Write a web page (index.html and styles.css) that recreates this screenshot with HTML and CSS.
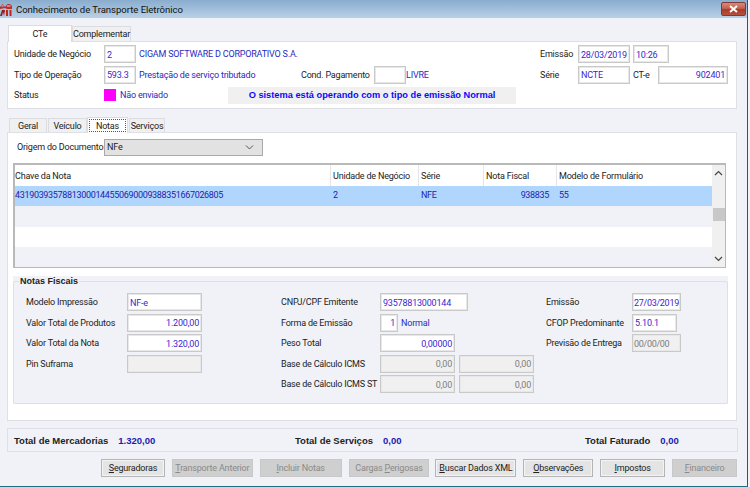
FILE: index.html
```html
<!DOCTYPE html>
<html lang="pt">
<head>
<meta charset="utf-8">
<title>Conhecimento de Transporte Eletrônico</title>
<link rel="stylesheet" href="styles.css">
</head>
<body>
<div class="window">
  <header class="titlebar">
    <svg class="logo" width="12" height="13" viewBox="0 0 12 13"><path d="M0 4 L2.5 1 L5 4 L7.5 1 L10 1 L12 3 L12 6 L7 6 L5 5 L0 6Z" fill="#b8302a"/><path d="M1.5 3 L3.5 3 M7 3 L10.5 3" stroke="#f3d6d2" stroke-width="1"/><path d="M0 13 L2 7 L5 7 L4 13 L3 9 L2 13Z" fill="#8f1f1a"/><rect x="6" y="7" width="2" height="6" fill="#c8201a"/><rect x="9.5" y="7" width="2" height="6" fill="#c8201a"/></svg>
    <span class="title">Conhecimento de Transporte Eletrônico</span>
    <button class="close" aria-label="Fechar"><svg width="9" height="8" viewBox="0 0 9 8"><path d="M1 1 L8 7 M8 1 L1 7" stroke="#fff" stroke-width="2"/></svg></button>
  </header>

  <div class="content">
    <nav class="tabs tabs-top">
      <span class="tab tab-cte">CTe</span>
      <span class="tab tab-comp">Complementar</span>
    </nav>
    <section class="panel panel-head">
      <div class="head-left">
        <div class="row">
          <label class="lbl lbl-head">Unidade de Negócio</label>
          <span class="input w32">2</span>
          <span class="val val-gap">CIGAM SOFTWARE D CORPORATIVO S.A.</span>
        </div>
        <div class="row">
          <label class="lbl lbl-head">Tipo de Operação</label>
          <span class="input w32">593.3</span>
          <span class="val val-gap val-op">Prestação de serviço tributado</span>
          <label class="lbl lbl-cond">Cond. Pagamento</label>
          <span class="input w32"></span>
          <span class="val">LIVRE</span>
        </div>
        <div class="row">
          <label class="lbl lbl-head">Status</label>
          <span class="swatch"></span>
          <span class="val val-status">Não enviado</span>
          <span class="banner">O sistema está operando com o tipo de emissão Normal</span>
        </div>
      </div>
      <div class="head-right">
        <div class="row">
          <label class="lbl lbl-right">Emissão</label>
          <span class="input w52">28/03/2019</span>
          <span class="input w36 ml3">10:26</span>
        </div>
        <div class="row">
          <label class="lbl lbl-right">Série</label>
          <span class="input w52">NCTE</span>
          <label class="lbl lbl-cte">CT-e</label>
          <span class="input w70 right">902401</span>
        </div>
      </div>
    </section>

    <nav class="tabs tabs-sub">
      <span class="stab stab-geral">Geral</span>
      <span class="stab stab-veic">Veículo</span>
      <span class="stab stab-notas"><span class="focus">Notas</span></span>
      <span class="stab stab-serv">Serviços</span>
    </nav>
    <section class="panel panel-main">
      <div class="origem">
        <label class="lbl lbl-origem">Origem do Documento</label>
        <span class="select">NFe<svg width="9" height="5" viewBox="0 0 9 5"><path d="M1 0.5 L4.5 4 L8 0.5" fill="none" stroke="#555"/></svg></span>
      </div>

      <div class="table">
        <div class="grid">
          <div class="th">Chave da Nota</div><div class="th">Unidade de Negócio</div><div class="th">Série</div><div class="th">Nota Fiscal</div><div class="th last">Modelo de Formulário</div>
          <div class="td sel">43190393578813000144550690009388351667026805</div><div class="td sel">2</div><div class="td sel">NFE</div><div class="td sel right">938835</div><div class="td sel">55</div>
          <div class="td alt"></div><div class="td alt"></div><div class="td alt"></div><div class="td alt"></div><div class="td alt"></div>
          <div class="td"></div><div class="td"></div><div class="td"></div><div class="td"></div><div class="td"></div>
          <div class="td alt"></div><div class="td alt"></div><div class="td alt"></div><div class="td alt"></div><div class="td alt"></div>
        </div>
        <div class="scroll">
          <svg width="9" height="6" viewBox="0 0 9 6"><path d="M1 5 L4.5 1.5 L8 5" fill="none" stroke="#444" stroke-width="1.2"/></svg>
          <span class="thumb"></span>
          <svg width="9" height="6" viewBox="0 0 9 6"><path d="M1 1 L4.5 4.5 L8 1" fill="none" stroke="#444" stroke-width="1.2"/></svg>
        </div>
      </div>

      <div class="group">
        <div class="legend">Notas Fiscais</div>
        <div class="frame">
          <div class="col col-a">
            <div class="row fr"><label class="lbl la">Modelo Impressão</label><span class="input w75">NF-e</span></div>
            <div class="row fr"><label class="lbl la">Valor Total de Produtos</label><span class="input w75 right">1.200,00</span></div>
            <div class="row fr"><label class="lbl la">Valor Total da Nota</label><span class="input w75 right">1.320,00</span></div>
            <div class="row fr"><label class="lbl la">Pin Suframa</label><span class="input w75 off"></span></div>
          </div>
          <div class="col col-b">
            <div class="row fr"><label class="lbl lb">CNPJ/CPF Emitente</label><span class="input w88">93578813000144</span></div>
            <div class="row fr"><label class="lbl lb">Forma de Emissão</label><span class="input w18 right">1</span><span class="val ml3">Normal</span></div>
            <div class="row fr"><label class="lbl lb">Peso Total</label><span class="input w75 right">0,00000</span></div>
            <div class="row fr"><label class="lbl lb">Base de Cálculo ICMS</label><span class="input w75 right off">0,00</span><span class="input w75 right off ml4">0,00</span></div>
            <div class="row fr"><label class="lbl lb">Base de Cálculo ICMS ST</label><span class="input w75 right off">0,00</span><span class="input w75 right off ml4">0,00</span></div>
          </div>
          <div class="col col-c">
            <div class="row fr"><label class="lbl lc">Emissão</label><span class="input w49">27/03/2019</span></div>
            <div class="row fr"><label class="lbl lc">CFOP Predominante</label><span class="input w45">5.10.1</span></div>
            <div class="row fr"><label class="lbl lc">Previsão de Entrega</label><span class="input w49 off">00/00/00</span></div>
          </div>
        </div>
      </div>
    </section>

    <section class="totals">
      <span class="tot tot-a"><b>Total de Mercadorias</b><b class="num">1.320,00</b></span>
      <span class="tot tot-b"><b>Total de Serviços</b><b class="num">0,00</b></span>
      <span class="tot tot-c"><b>Total Faturado</b><b class="num">0,00</b></span>
    </section>

    <footer class="actions">
      <button class="btn b-seg"><u>S</u>eguradoras</button>
      <button class="btn off b-tra" disabled><u>T</u>ransporte Anterior</button>
      <button class="btn off b-inc" disabled><u>I</u>ncluir Notas</button>
      <button class="btn off b-car" disabled>Cargas <u>P</u>erigosas</button>
      <button class="btn b-bus"><u>B</u>uscar Dados XML</button>
      <button class="btn b-obs"><u>O</u>bservações</button>
      <button class="btn b-imp"><u>I</u>mpostos</button>
      <button class="btn off b-fin" disabled><u>F</u>inanceiro</button>
    </footer>
  </div>
</div>
</body>
</html>
```
FILE: styles.css
```css
* { box-sizing: border-box; }
html, body { margin: 0; padding: 0; }
body {
  width: 750px; height: 487px; overflow: hidden; background: #f0f2f8;
  font-family: Roboto, "Liberation Sans", sans-serif; font-size: 9px; letter-spacing: -.2px; color: #222;
}
.window {
  width: 748px; height: 487px; display: flex; flex-direction: column;
  background: #f0f2f8; border-right: 1px solid #1c5f73; border-bottom: 1px solid #1c6f80;
}
.titlebar {
  height: 18px; flex: none; display: flex; align-items: center; padding-left: 0;
  background: linear-gradient(#8aacce, #b8d1e8);
}
.logo { margin: 0 4px 0 0; flex: none; }
.title { font-size: 9.6px; color: #111; letter-spacing: -.05px; }
.close {
  margin-left: auto; margin-right: 1px; width: 25px; height: 14px; padding: 0;
  border: 1px solid #7d3a36; border-radius: 2px; display: flex; align-items: center; justify-content: center;
  background: linear-gradient(#d88a78 0%, #c4604e 45%, #a83a2a 55%, #b8503e 100%);
}
.content { flex: 1; display: flex; flex-direction: column; padding: 0 10px 0 7px; }

.tabs { display: flex; align-items: flex-end; flex: none; }
.tabs-top { height: 23px; padding-left: 1px; }
.tab { display: flex; align-items: center; justify-content: center; border: 1px solid #dcdce0; border-bottom: 0; }
.tab-cte { width: 64px; height: 17px; background: #fff; margin-bottom: -1px; position: relative; z-index: 1; }
.tab-comp { width: 59px; height: 15px; background: #f0f0f0; }

.panel { background: #fff; border: 1px solid #dfe0e6; }
.panel-head { height: 68px; display: flex; padding: 2px 0 0 6px; flex: none; }
.head-left { width: 526px; }
.head-right { flex: 1; }
.row { display: flex; align-items: center; height: 20.5px; }
.lbl { flex: none; white-space: nowrap; }
.lbl-head { width: 90px; }
.input {
  flex: none; height: 18px; border: 1px solid #c9c9c9; outline: 1px solid #e8e8e8; outline-offset: -2px;
  background: #fff; color: #3a1fd0; padding: 1px 2px 0 2px; display: flex; align-items: center; white-space: nowrap;
}
.right { justify-content: flex-end; }
.off { background: #f0f0f0; color: #7d7d7d; }
.val { color: #2a2ac0; white-space: nowrap; }
.val-gap { margin-left: 3px; }
.val-op { width: 162px; }
.lbl-cond { width: 73px; }
.w32 { width: 32px; }
.w52 { width: 52px; }
.w36 { width: 36px; }
.w70 { width: 70px; }
.w75 { width: 75px; }
.w88 { width: 88px; }
.w18 { width: 18px; }
.w49 { width: 49px; padding-left: 1px; letter-spacing: -.3px; }
.w45 { width: 45px; }
.ml3 { margin-left: 3px; }
.ml4 { margin-left: 4px; }
.swatch { width: 12px; height: 12px; background: #ff00ff; flex: none; }
.val-status { margin-left: 4px; width: 108px; }
.banner {
  width: 288px; height: 17px; background: #f0f0f0; color: #0a0aff; font-weight: 700; white-space: nowrap;
  font-family: "Liberation Sans", sans-serif; font-size: 9.25px; letter-spacing: 0;
  display: flex; align-items: center; justify-content: center;
}
.lbl-right { width: 38px; }
.lbl-cte { margin-left: 3px; width: 25px; }

.tabs-sub { height: 23px; padding-left: 2px; }
.stab { height: 14px; background: #f0f0f0; border: 1px solid #dcdce0; border-bottom: 0; display: flex; align-items: center; justify-content: center; }
.stab-geral { width: 38px; }
.stab-veic { width: 39px; margin-left: 1px; }
.stab-notas { width: 41px; height: 16px; background: #fff; margin-bottom: -1px; position: relative; z-index: 1; padding: 1px; }
.focus { border: 1px dotted #555; width: 100%; height: 100%; display: flex; align-items: center; justify-content: center; }
.stab-serv { width: 36px; margin-left: 1px; }

.panel-main { height: 289px; flex: none; padding: 5px 0 0 5px; }
.origem { display: flex; align-items: center; height: 18px; padding-left: 4px; }
.lbl-origem { width: 87px; }
.select {
  width: 159px; height: 17px; background: #e2e2e2; border: 1px solid #a9a9a9; padding: 0 8px 0 2px;
  display: flex; align-items: center; justify-content: space-between; color: #222;
}
.table {
  width: 713px; height: 105px; margin-top: 7px; display: flex;
  border: 2px solid #b9b9b9; border-right-width: 1px; border-bottom-width: 1px; background: #fff;
}
.grid { width: 697px; display: grid; grid-template-columns: 316px 88px 65px 73px 155px; grid-template-rows: 21px 20px 21px 20px 20px; }
.th { background: #fff; border-right: 1px solid #e6e6e6; padding: 0; display: flex; align-items: center; white-space: nowrap; }
.th.last { border-right: 0; }
.td { display: flex; align-items: center; padding: 0 4px 2px 0; color: #2323a8; white-space: nowrap; background: #fff; letter-spacing: -.33px; }
.th + .th, .td + .td { padding-left: 2px; }
.td.right { padding-right: 8px; }
.td.sel { background: #b0d6fe; }
.td.alt { background: #f0f2f8; }
.scroll { width: 15px; background: #f0f0f0; display: flex; flex-direction: column; align-items: center; justify-content: space-between; padding: 5px 0; position: relative; }
.thumb { position: absolute; left: 1px; top: 43px; width: 12px; height: 13px; background: #c8c8c8; }

.group { width: 715px; margin-top: 8px; background: #f0f2f8; height: 128px; padding-top: 5px; position: relative; }
.legend { position: absolute; left: 6px; top: 0; font-weight: 700; background: #f0f2f8; padding: 0 1px; line-height: 10px; font-family: "Liberation Sans", sans-serif; font-size: 9px; letter-spacing: 0; }
.frame { height: 123px; border: 1px solid #dfe0e6; border-radius: 2px; display: flex; padding-top: 10px; }
.fr { height: 20.5px; }
.col-a { width: 267px; padding-left: 12px; }
.col-b { width: 265px; padding-left: 0; }
.col-c { flex: 1; }
.la { width: 101px; }
.lb { width: 99px; }
.lc { width: 86px; }

.totals {
  width: 731px; height: 24px; margin-top: 7px; flex: none; display: flex; align-items: center;
  border: 1px solid #dfe0e6; background: #f0f2f8;
  font-family: "Liberation Sans", sans-serif; font-size: 9.5px; letter-spacing: 0;
}
.tot { display: flex; }
.num { color: #1a1ab0; margin-left: 10px; }
.tot-a { margin-left: 6px; width: 281px; }
.tot-b { width: 290px; }

.actions { display: flex; margin-top: 7px; padding-left: 94px; flex: none; }
.btn {
  height: 18px; padding: 0; border: 1px solid #b4b4b4; background: #e4e4e4; outline: 1px solid #f4f4f4; outline-offset: -2px;
  font: inherit; letter-spacing: inherit; color: #222; white-space: nowrap;
}
.btn.off { background: #cfcfcf; color: #8a8a8a; outline: 0; border-color: #c8c8c8; }
.b-seg { width: 64px; }
.b-tra { width: 81px; margin-left: 7px; }
.b-inc { width: 82px; margin-left: 7px; }
.b-car { width: 81px; margin-left: 7px; }
.b-bus { width: 81px; margin-left: 6px; }
.b-obs { width: 70px; margin-left: 7px; }
.b-imp { width: 65px; margin-left: 7px; }
.b-fin { width: 65px; margin-left: 7px; }
```
